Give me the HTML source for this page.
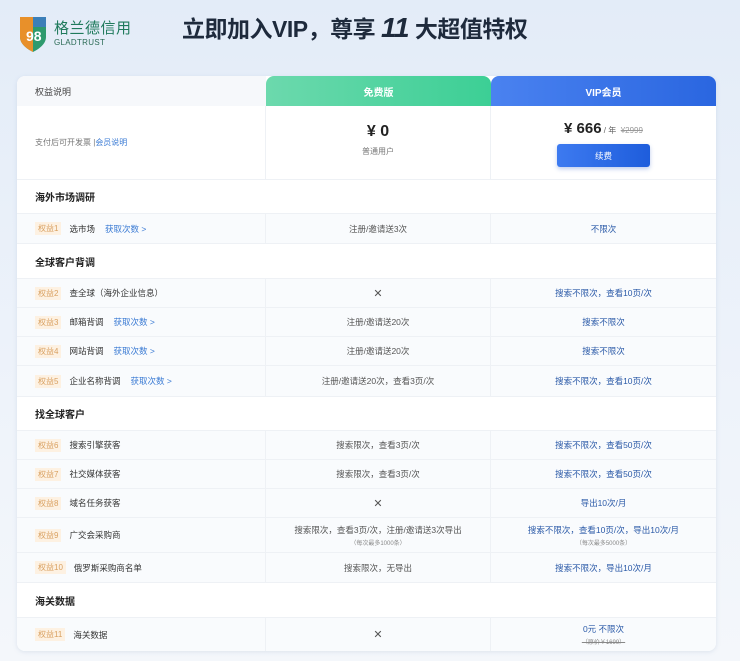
<!DOCTYPE html><html><head><meta charset="utf-8"><style>
*{margin:0;padding:0;box-sizing:border-box}
body{width:740px;height:661px;overflow:hidden;font-family:"Liberation Sans","Noto Sans CJK SC",sans-serif;background:linear-gradient(180deg,#e3ecf8 0%,#eef3fa 60%,#f4f7fb 100%);position:relative;color:#333}
.a{position:absolute}
.tbl{position:absolute;left:17px;top:76px;width:699px;height:575px;background:#fff;border-radius:8px;box-shadow:0 1px 4px rgba(150,170,200,.25)}
.row{position:absolute;left:0;width:699px;font-size:8.5px;border-top:1px solid #eef1f5;background:#f9fbfd}
.row div{position:absolute;top:0;height:100%;display:flex;align-items:center}
.c1{left:0;width:249px;padding-left:18px;border-right:1px solid #eef1f5}
.c2{left:249px;width:225px;justify-content:center;border-right:1px solid #eef1f5;color:#555;flex-direction:column}
.c3{left:474px;width:225px;justify-content:center;color:#2b5aa8;flex-direction:column}
.tag{background:#fdf1e2;color:#d9a060;padding:1px 3px;margin-right:8px;font-size:8px}
.lk{color:#3b7bd4;margin-left:10px}
.sec{position:absolute;left:0;width:699px;background:#fff;font-size:10px;font-weight:bold;color:#222;padding-left:18px;display:flex;align-items:center;border-top:1px solid #eef1f5}
.sm{font-size:6px;color:#888;margin-top:2px}
</style></head><body>
<svg class="a" style="left:18px;top:14px" width="30" height="38" viewBox="0 0 30 38"><path d="M2 3h26v20c0 7-7 12-13 15C9 35 2 30 2 23z" fill="#2e9a6e"/><path d="M2 3h13v35C9 35 2 30 2 23z" fill="#e8902a"/><path d="M15 3h13v10H15z" fill="#3c7fb8"/><text x="8" y="27" font-size="14" font-weight="bold" fill="#fff" font-family="Liberation Sans">98</text></svg>
<div class="a" style="left:54px;top:20px;font-size:15px;line-height:17px;color:#1f7a5c;letter-spacing:.5px">格兰德信用</div>
<div class="a" style="left:54px;top:38px;font-size:8px;line-height:9px;color:#2a6b55;letter-spacing:.3px">GLADTRUST</div>
<div class="a" style="left:182px;top:10px;font-size:23px;font-weight:bold;color:#1e2a3c;white-space:nowrap;letter-spacing:-.5px">立即加入VIP，尊享 <i style="font-size:28px">11</i> 大超值特权</div>
<div class="tbl">
<div class="a" style="left:0;top:0;width:249px;height:30px;background:#f6f8fb;border-radius:8px 0 0 0;font-size:9px;padding-left:18px;display:flex;align-items:center;color:#444">权益说明</div>
<div class="a" style="left:249px;top:0;width:225px;height:30px;background:linear-gradient(90deg,#6cd9ad,#3ccf95);border-radius:8px 8px 0 0;color:#fff;font-size:10px;font-weight:bold;display:flex;align-items:center;justify-content:center">免费版</div>
<div class="a" style="left:474px;top:0;width:225px;height:30px;background:linear-gradient(90deg,#4a82f0,#2a66e0);border-radius:8px 8px 0 0;color:#fff;font-size:10px;font-weight:bold;display:flex;align-items:center;justify-content:center">VIP会员</div>
<div class="a" style="left:0;top:30px;width:249px;height:73px;border-right:1px solid #eef1f5;font-size:8px;color:#777;padding-left:18px;display:flex;align-items:center">支付后可开发票 | <span style="color:#3b7bd4">会员说明</span></div>
<div class="a" style="left:249px;top:30px;width:225px;height:73px;border-right:1px solid #eef1f5;text-align:center"><div style="margin-top:17px;font-size:16px;font-weight:bold;color:#222">¥ 0</div><div style="font-size:8px;color:#777;margin-top:5px">普通用户</div></div>
<div class="a" style="left:474px;top:30px;width:225px;height:73px;text-align:center"><div style="margin-top:14px;font-size:15px;font-weight:bold;color:#222">¥ 666<span style="font-size:8px;font-weight:normal;color:#666"> / 年 &nbsp;<s style="color:#999">¥2999</s></span></div><div style="margin:7px auto 0;width:93px;height:23px;background:linear-gradient(90deg,#3d7af0,#1e5ddc);border-radius:3px;color:#fff;font-size:8.5px;display:flex;align-items:center;justify-content:center;box-shadow:0 2px 4px rgba(40,90,200,.3)">续费</div></div>
<div class="sec" style="top:103px;height:34px">海外市场调研</div>
<div class="row" style="top:137px;height:30px"><div class="c1"><span class="tag">权益1</span>选市场<span class="lk">获取次数 &gt;</span></div><div class="c2">注册/邀请送3次</div><div class="c3">不限次</div></div>
<div class="sec" style="top:167px;height:35px">全球客户背调</div>
<div class="row" style="top:202px;height:29px"><div class="c1"><span class="tag">权益2</span>查全球（海外企业信息）</div><div class="c2" style="font-size:11px">✕</div><div class="c3">搜索不限次，查看10页/次</div></div>
<div class="row" style="top:231px;height:29px"><div class="c1"><span class="tag">权益3</span>邮箱背调<span class="lk">获取次数 &gt;</span></div><div class="c2">注册/邀请送20次</div><div class="c3">搜索不限次</div></div>
<div class="row" style="top:260px;height:29px"><div class="c1"><span class="tag">权益4</span>网站背调<span class="lk">获取次数 &gt;</span></div><div class="c2">注册/邀请送20次</div><div class="c3">搜索不限次</div></div>
<div class="row" style="top:289px;height:31px"><div class="c1"><span class="tag">权益5</span>企业名称背调<span class="lk">获取次数 &gt;</span></div><div class="c2">注册/邀请送20次，查看3页/次</div><div class="c3">搜索不限次，查看10页/次</div></div>
<div class="sec" style="top:320px;height:34px">找全球客户</div>
<div class="row" style="top:354px;height:29px"><div class="c1"><span class="tag">权益6</span>搜索引擎获客</div><div class="c2">搜索限次，查看3页/次</div><div class="c3">搜索不限次，查看50页/次</div></div>
<div class="row" style="top:383px;height:29px"><div class="c1"><span class="tag">权益7</span>社交媒体获客</div><div class="c2">搜索限次，查看3页/次</div><div class="c3">搜索不限次，查看50页/次</div></div>
<div class="row" style="top:412px;height:29px"><div class="c1"><span class="tag">权益8</span>域名任务获客</div><div class="c2" style="font-size:11px">✕</div><div class="c3">导出10次/月</div></div>
<div class="row" style="top:441px;height:35px"><div class="c1"><span class="tag">权益9</span>广交会采购商</div><div class="c2">搜索限次，查看3页/次，注册/邀请送3次导出<span class="sm">（每次最多1000条）</span></div><div class="c3">搜索不限次，查看10页/次，导出10次/月<span class="sm">（每次最多5000条）</span></div></div>
<div class="row" style="top:476px;height:30px"><div class="c1"><span class="tag">权益10</span>俄罗斯采购商名单</div><div class="c2">搜索限次，无导出</div><div class="c3">搜索不限次，导出10次/月</div></div>
<div class="sec" style="top:506px;height:35px">海关数据</div>
<div class="row" style="top:541px;height:34px;border-radius:0 0 8px 8px"><div class="c1"><span class="tag">权益11</span>海关数据</div><div class="c2" style="font-size:11px">✕</div><div class="c3">0元 不限次<span class="sm"><s>（原价￥1699）</s></span></div></div>
</div>
</body></html>
